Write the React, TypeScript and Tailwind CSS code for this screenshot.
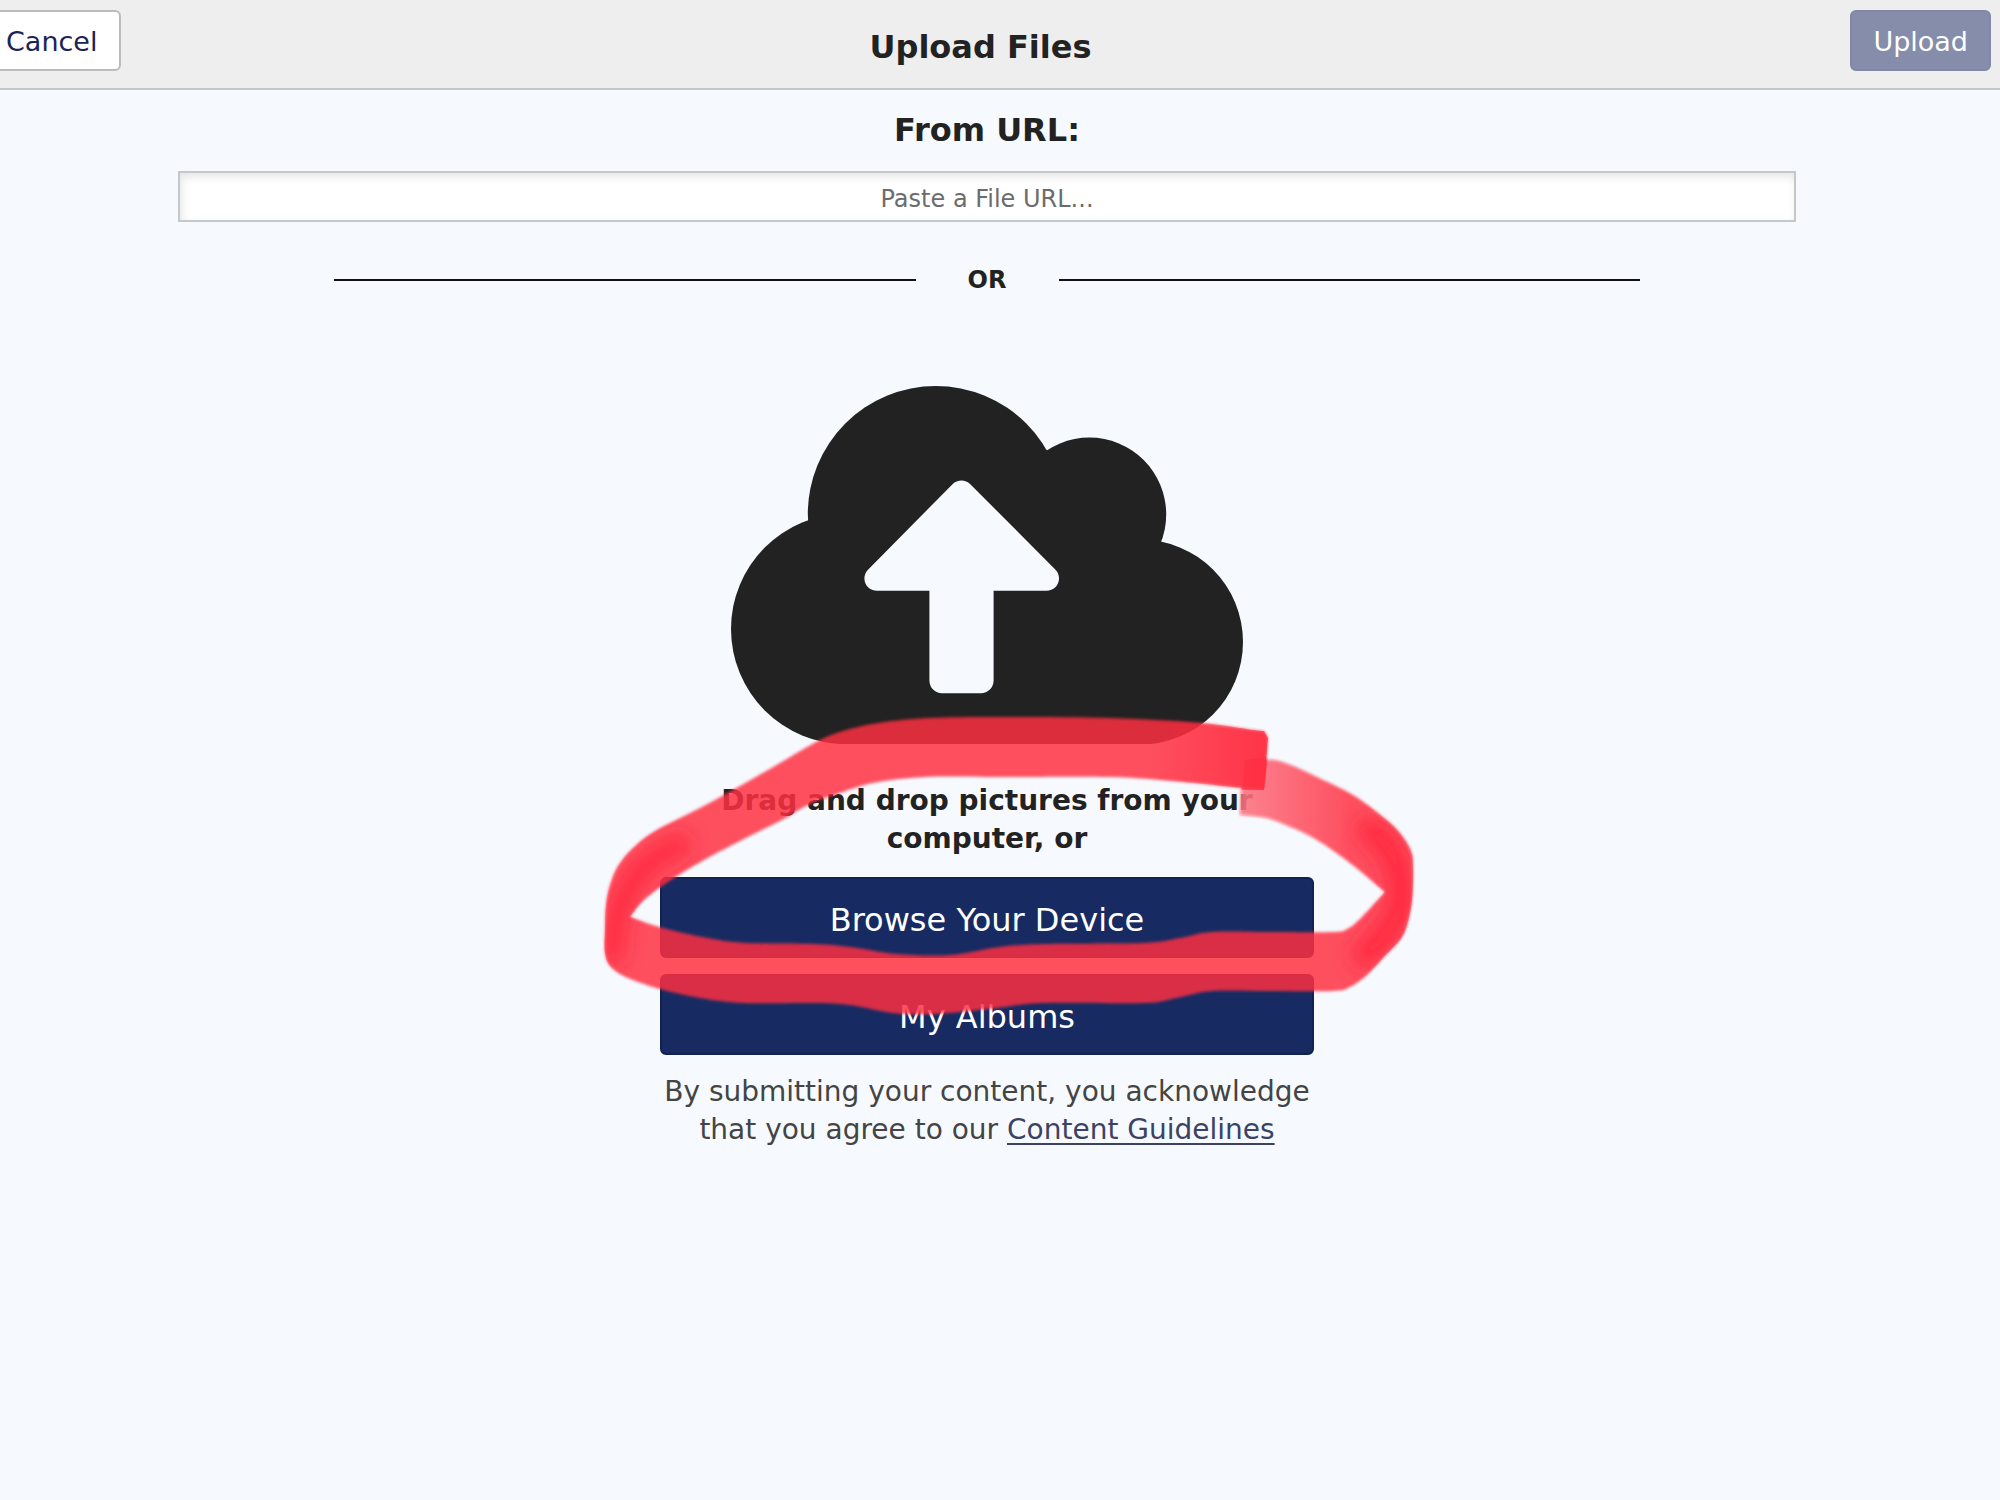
import { useState } from "react";
import { clsx } from "clsx";

type Point = [number, number];

// Outer and inner edge of the marker stroke, in the order they are drawn
const OUTER_EDGE: Point[] = [
  [1243, 759], [1273, 760], [1293, 766], [1317, 777], [1353, 795], [1383, 817], [1400, 833], [1411, 851],
  [1413, 867], [1412, 900], [1407, 925], [1400, 940], [1383, 958], [1367, 975], [1350, 987], [1333, 991],
  [1270, 991], [1212, 991], [1176, 998], [1144, 1003], [1042, 1003], [997, 1008], [935, 1014], [893, 1013],
  [850, 1005], [813, 1003], [745, 1003], [700, 998], [660, 989], [628, 978], [611, 967], [605, 953],
  [605, 930], [606, 905], [610, 885], [618, 866], [632, 849], [655, 831], [700, 808], [740, 786],
  [780, 763], [820, 740], [850, 729], [885, 722], [930, 718], [1000, 717], [1110, 718], [1200, 723],
  [1253, 730], [1264, 731],
];

const INNER_EDGE: Point[] = [
  [1268, 738], [1266, 765], [1264, 787], [1255, 789], [1183, 782], [1110, 777], [1000, 777], [925, 777],
  [873, 783], [840, 793], [810, 804], [780, 821], [740, 841], [697, 864], [662, 886], [642, 902],
  [630, 917],
];

const INNER_EDGE_BOTTOM: Point[] = [
  [630, 917], [663, 928], [713, 939], [747, 943], [813, 944], [850, 947], [897, 954], [950, 955],
  [1000, 947], [1045, 944], [1143, 943], [1180, 938], [1212, 932], [1270, 932], [1333, 932], [1347, 929],
  [1360, 919], [1385, 892],
];

const INNER_EDGE_RIGHT: Point[] = [
  [1385, 892], [1350, 863], [1317, 840], [1293, 828], [1267, 818], [1240, 815],
];

function curveThrough(points: Point[]) {
  return points
    .slice(0, -1)
    .map((p1, i) => {
      const p0 = points[i - 1] ?? p1;
      const p2 = points[i + 1];
      const p3 = points[i + 2] ?? p2;
      const c1 = [p1[0] + (p2[0] - p0[0]) / 6, p1[1] + (p2[1] - p0[1]) / 6];
      const c2 = [p2[0] - (p3[0] - p1[0]) / 6, p2[1] - (p3[1] - p1[1]) / 6];
      return `C${c1.join(" ")} ${c2.join(" ")} ${p2.join(" ")}`;
    })
    .join("");
}

const MARKER_PATH = `M1243 759${curveThrough(OUTER_EDGE)}L1268 738${curveThrough(INNER_EDGE)}${curveThrough(
  INNER_EDGE_BOTTOM,
)}${curveThrough(INNER_EDGE_RIGHT)}Z`;

function CloudUploadIcon({ className }: { className?: string }) {
  return (
    <svg viewBox="0 0 512 358" className={className} aria-hidden="true">
      <g fill="#222222">
        <circle cx="115.2" cy="243" r="115.2" />
        <circle cx="204.8" cy="128" r="128" />
        <circle cx="358.4" cy="128.4" r="76.8" />
        <circle cx="409.6" cy="256" r="102.4" />
        <path d="M115.2 358.2V200L77 134.4L204.8 100L315.4 63.8L430 156.3L409.6 358.2Z" />
      </g>
      <path
        fill="#f6faff"
        d="M198.4 204.8H146C139 204.8 133.4 199.5 133.4 192.5C133.4 189 134.8 186 137 183.7L221.5 98.2C226.5 93.2 234.3 93.2 239.3 98.2L324.5 183.7C326.8 186 328 189 328 192.5C328 199.5 322.4 204.8 315.4 204.8H262.6V294.4C262.6 301.5 257 307.2 249.8 307.2H211.2C204 307.2 198.4 301.5 198.4 294.4Z"
      />
    </svg>
  );
}

function MarkerCircle({ className }: { className?: string }) {
  return (
    <svg viewBox="590 700 840 330" className={className} aria-hidden="true">
      <defs>
        <filter id="soft-edge" x="-5%" y="-5%" width="110%" height="110%">
          <feGaussianBlur stdDeviation="1.6" />
        </filter>
        <filter id="soft-patch" filterUnits="userSpaceOnUse" x="560" y="680" width="900" height="370">
          <feGaussianBlur stdDeviation="10" />
        </filter>
        <clipPath id="marker-clip">
          <path d={MARKER_PATH} />
        </clipPath>
        <linearGradient id="marker-start" gradientUnits="userSpaceOnUse" x1="1240" y1="0" x2="1350" y2="0">
          <stop offset="0" stopColor="#f6faff" stopOpacity="0.3" />
          <stop offset="1" stopColor="#f6faff" stopOpacity="0" />
        </linearGradient>
        <linearGradient id="marker-end" gradientUnits="userSpaceOnUse" x1="1150" y1="0" x2="1266" y2="0">
          <stop offset="0" stopColor="#ff2238" stopOpacity="0" />
          <stop offset="1" stopColor="#ff2238" stopOpacity="0.6" />
        </linearGradient>
      </defs>
      <path d={MARKER_PATH} fill="#ff2f42" fillOpacity="0.84" filter="url(#soft-edge)" />
      <g clipPath="url(#marker-clip)">
        <path d="M1236 790H1264L1269 750L1300 760L1360 790V880L1236 822Z" fill="url(#marker-start)" />
        <path d="M1150 715H1270L1264 790L1150 785Z" fill="url(#marker-end)" />
        <g filter="url(#soft-patch)" fill="none" stroke="#ff2238" strokeLinecap="round">
          <path d="M680 845Q616 868 612 955" strokeWidth="22" strokeOpacity="0.8" />
          <path d="M1370 830Q1402 850 1402 900Q1395 930 1365 955" strokeWidth="26" strokeOpacity="0.8" />
        </g>
        <path d="M1245 760L1267 757L1265 788L1243 786Z" fill="#ff2238" fillOpacity="0.3" />
      </g>
    </svg>
  );
}

function PrimaryButton({ children }: { children: React.ReactNode }) {
  return (
    <button
      type="button"
      className="flex h-[81px] w-full items-center justify-center rounded-md border-2 border-[#12224f] bg-[#172b62] pt-1 text-[32px] leading-10 text-white"
    >
      {children}
    </button>
  );
}

function Divider() {
  return (
    <div className="mt-10 flex w-2/3 max-w-[1306px] items-center">
      <span className="h-0.5 flex-1 bg-[#111111]" />
      <span className="w-[143px] text-center text-2xl font-bold leading-9">OR</span>
      <span className="h-0.5 flex-1 bg-[#111111]" />
    </div>
  );
}

export default function App() {
  const [url, setUrl] = useState("");

  return (
    <div className="min-h-screen overflow-hidden bg-[#f6faff] font-[Verdana,'DejaVu_Sans',sans-serif] text-[#222222]">
      <header className="border-b-2 border-[#c3c5c8] bg-[#eeeeee]">
        {/* The cancel button runs off the left edge */}
        <div className="-ml-[18px] grid h-22 grid-cols-[1fr_auto_1fr] items-start pt-2.5 pr-[21px]">
          <button
            type="button"
            className="h-[61px] justify-self-start rounded-md border-2 border-[#bbbbbb] bg-white px-[22px] pt-1 text-[27px] text-[#182556]"
          >
            Cancel
          </button>
          <h1 className="pt-[17px] text-[32px] font-bold leading-10">Upload Files</h1>
          <button
            type="button"
            disabled={!url}
            className={clsx(
              "-mr-3 h-[61px] justify-self-end rounded-md border-2 px-[21px] pt-1 text-[27px] text-white",
              url ? "border-[#12224f] bg-[#172b62]" : "border-[#8088a3] bg-[#858daa]",
            )}
          >
            Upload
          </button>
        </div>
      </header>

      <main className="mr-[26px] flex flex-col items-center pt-5">
        <label htmlFor="file-url" className="text-[32px] font-bold leading-10">
          From URL:
        </label>
        <input
          id="file-url"
          type="url"
          value={url}
          onChange={(event) => setUrl(event.target.value)}
          placeholder="Paste a File URL..."
          className="mt-[21px] h-[51px] w-[82%] border-2 border-[#c5c8cb] bg-white pt-1 text-center text-2xl shadow-[inset_2px_4px_8px_rgba(0,0,0,0.1)] outline-none placeholder:text-[#6c6c6c]"
        />

        <Divider />

        <section className="relative mt-[88px] flex w-full max-w-[654px] flex-col items-center">
          <CloudUploadIcon className="w-[512px]" />
          <p className="mt-[38px] text-center text-[28px] font-bold leading-[38px]">
            Drag and drop pictures from your
            <br />
            computer, or
          </p>
          <div className="mt-[19px] flex w-full flex-col gap-4">
            <PrimaryButton>Browse Your Device</PrimaryButton>
            <PrimaryButton>My Albums</PrimaryButton>
          </div>
          <p className="mt-[18px] text-center text-[28px] leading-[38px] whitespace-nowrap text-[#444444]">
            By submitting your content, you acknowledge
            <br />
            that you agree to our{" "}
            <a href="#guidelines" className="text-[#3c4263] underline decoration-2 underline-offset-4">
              Content Guidelines
            </a>
          </p>
          <MarkerCircle className="pointer-events-none absolute top-[314px] -left-[70px] w-[840px] max-w-none" />
        </section>
      </main>
    </div>
  );
}
